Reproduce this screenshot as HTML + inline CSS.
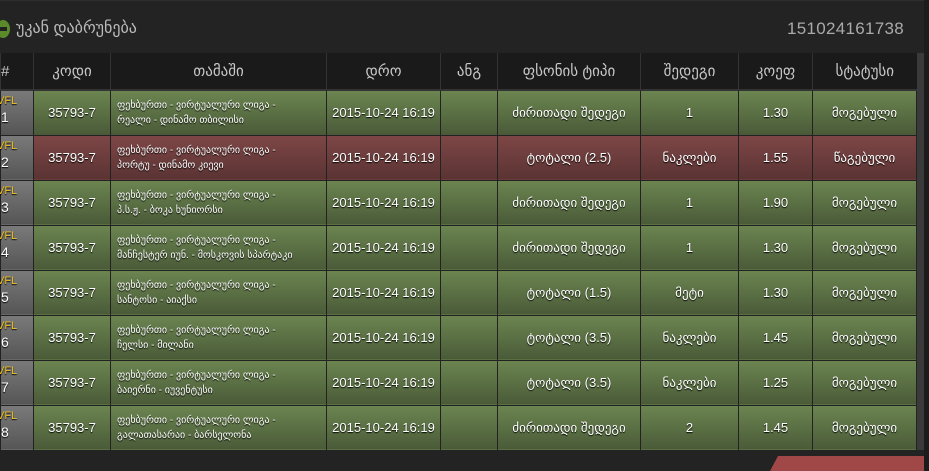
<!DOCTYPE html>
<html><head><meta charset="utf-8"><style>
*{margin:0;padding:0;box-sizing:border-box}
body{width:929px;height:471px;background:#1c1c1c;overflow:hidden;font-family:"Liberation Sans","DejaVu Sans",sans-serif;position:relative}
.top{position:absolute;left:0;top:0;width:924px;height:53px;background:#232323;border-top:1px solid #2e2e2e}
.back{position:absolute;left:16px;top:17px;color:#bbb;font-size:16px}
.ic{position:absolute;left:-4px;top:19px;width:14px;height:18px;border-radius:50%;background:#5a8a2a}
.ic:after{content:"";position:absolute;left:3px;top:7px;width:8px;height:4px;background:#222}
.num{position:absolute;right:20px;top:18px;color:#aaa;font-size:17px;letter-spacing:.3px}
table{position:absolute;left:0;top:53px;border-collapse:collapse;width:917px}
th{height:37px;background:#1a1a1a;color:#c8c8c8;font-weight:normal;font-size:15px;border-left:1px solid #333;border-bottom:2px solid #333}
td{height:45px;border:1px solid #222;color:#fff;font-size:13px;text-align:center;text-shadow:0 1px 1px #000}
tr.g td{background:linear-gradient(#6b8550,#4a5a38)}
tr.r td{background:linear-gradient(#7e4646,#5a3333)}
tr td.n{background:linear-gradient(#7a7a7a,#555)!important;text-align:left;font-size:14px;line-height:16px;padding-top:2px;vertical-align:top}
.n b{color:#f0c020;font-weight:normal;font-size:11px;display:block;margin-left:-4px}
td.g{text-align:left;padding-left:6px;font-size:10px;line-height:15px}
.sb{position:absolute;left:917px;top:53px;width:7px;height:397px;background:#3a3a3a}
.bot{position:absolute;left:0;top:450px;width:924px;height:21px;background:#232323}
.red{position:absolute;left:770px;top:456px;width:154px;height:15px;background:#a04848;clip-path:polygon(8px 0,100% 0,100% 100%,0 100%)}
</style></head><body>
<div class="top"><div class="ic"></div><div class="back">უკან დაბრუნება</div><div class="num">151024161738</div></div>
<table>
<tr><th style="width:33px;text-align:left">#</th><th style="width:77px">კოდი</th><th style="width:216px">თამაში</th><th style="width:114px">დრო</th><th style="width:57px">ანგ</th><th style="width:143px">ფსონის ტიპი</th><th style="width:98px">შედეგი</th><th style="width:74px">კოეფ</th><th>სტატუსი</th></tr>
<tr class="g"><td class="n"><b>VFL</b>1</td><td>35793-7</td><td class="g">ფეხბურთი - ვირტუალური ლიგა -<br>რეალი - დინამო თბილისი</td><td>2015-10-24 16:19</td><td></td><td>ძირითადი შედეგი</td><td>1</td><td>1.30</td><td>მოგებული</td></tr>
<tr class="r"><td class="n"><b>VFL</b>2</td><td>35793-7</td><td class="g">ფეხბურთი - ვირტუალური ლიგა -<br>პორტუ - დინამო კიევი</td><td>2015-10-24 16:19</td><td></td><td>ტოტალი (2.5)</td><td>ნაკლები</td><td>1.55</td><td>წაგებული</td></tr>
<tr class="g"><td class="n"><b>VFL</b>3</td><td>35793-7</td><td class="g">ფეხბურთი - ვირტუალური ლიგა -<br>პ.ს.ჟ. - ბოკა ხუნიორსი</td><td>2015-10-24 16:19</td><td></td><td>ძირითადი შედეგი</td><td>1</td><td>1.90</td><td>მოგებული</td></tr>
<tr class="g"><td class="n"><b>VFL</b>4</td><td>35793-7</td><td class="g">ფეხბურთი - ვირტუალური ლიგა -<br>მანჩესტერ იუნ. - მოსკოვის სპარტაკი</td><td>2015-10-24 16:19</td><td></td><td>ძირითადი შედეგი</td><td>1</td><td>1.30</td><td>მოგებული</td></tr>
<tr class="g"><td class="n"><b>VFL</b>5</td><td>35793-7</td><td class="g">ფეხბურთი - ვირტუალური ლიგა -<br>სანტოსი - აიაქსი</td><td>2015-10-24 16:19</td><td></td><td>ტოტალი (1.5)</td><td>მეტი</td><td>1.30</td><td>მოგებული</td></tr>
<tr class="g"><td class="n"><b>VFL</b>6</td><td>35793-7</td><td class="g">ფეხბურთი - ვირტუალური ლიგა -<br>ჩელსი - მილანი</td><td>2015-10-24 16:19</td><td></td><td>ტოტალი (3.5)</td><td>ნაკლები</td><td>1.45</td><td>მოგებული</td></tr>
<tr class="g"><td class="n"><b>VFL</b>7</td><td>35793-7</td><td class="g">ფეხბურთი - ვირტუალური ლიგა -<br>ბაიერნი - იუვენტუსი</td><td>2015-10-24 16:19</td><td></td><td>ტოტალი (3.5)</td><td>ნაკლები</td><td>1.25</td><td>მოგებული</td></tr>
<tr class="g"><td class="n"><b>VFL</b>8</td><td>35793-7</td><td class="g">ფეხბურთი - ვირტუალური ლიგა -<br>გალათასარაი - ბარსელონა</td><td>2015-10-24 16:19</td><td></td><td>ძირითადი შედეგი</td><td>2</td><td>1.45</td><td>მოგებული</td></tr>
</table>
<div class="sb"></div>
<div class="bot"></div><div class="red"></div>
</body></html>
